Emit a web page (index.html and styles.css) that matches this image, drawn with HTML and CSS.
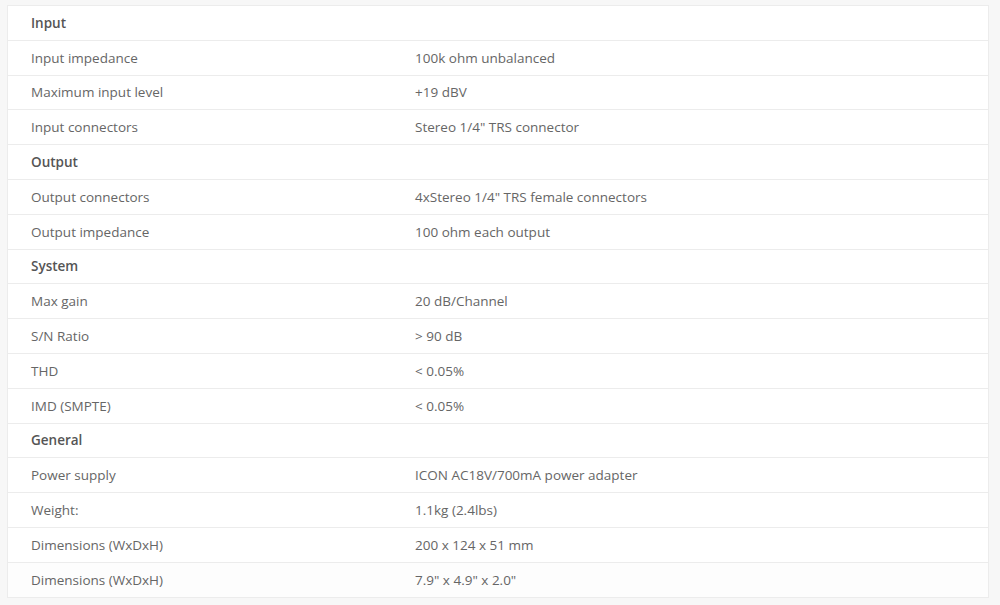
FILE: index.html
```html
<!DOCTYPE html>
<html lang="en">
<head>
    <meta charset="UTF-8">
    <meta name="viewport" content="width=device-width, initial-scale=1.0">
    <title>Specifications</title>
    <link rel="stylesheet" href="styles.css">
</head>
<body>
    <table class="specs">
        <tr class="group"><td colspan="2">Input</td></tr>
        <tr><td>Input impedance</td><td>100k ohm unbalanced</td></tr>
        <tr><td>Maximum input level</td><td>+19 dBV</td></tr>
        <tr><td>Input connectors</td><td>Stereo 1/4" TRS connector</td></tr>
        <tr class="group"><td colspan="2">Output</td></tr>
        <tr><td>Output connectors</td><td>4xStereo 1/4" TRS female connectors</td></tr>
        <tr><td>Output impedance</td><td>100 ohm each output</td></tr>
        <tr class="group"><td colspan="2">System</td></tr>
        <tr><td>Max gain</td><td>20 dB/Channel</td></tr>
        <tr><td>S/N Ratio</td><td>&gt; 90 dB</td></tr>
        <tr><td>THD</td><td>&lt; 0.05%</td></tr>
        <tr><td>IMD (SMPTE)</td><td>&lt; 0.05%</td></tr>
        <tr class="group"><td colspan="2">General</td></tr>
        <tr><td>Power supply</td><td>ICON AC18V/700mA power adapter</td></tr>
        <tr><td>Weight:</td><td>1.1kg (2.4lbs)</td></tr>
        <tr><td>Dimensions (WxDxH)</td><td>200 x 124 x 51 mm</td></tr>
        <tr class="last"><td>Dimensions (WxDxH)</td><td>7.9" x 4.9" x 2.0"</td></tr>
    </table>
</body>
</html>
```

FILE: styles.css
```css
body {
    margin: 0;
    padding: 5px 11px 0 7px;
    background: #f7f7f7;
    font-family: 'Open Sans', sans-serif;
    font-size: 13.5px;
    color: #666;
}
.specs {
    width: 100%;
    border-collapse: collapse;
    background: white;
    border: 1px solid #ececec;
}
.specs td {
    height: 33.8px;
    padding: 0 23px;
    border-top: 1px solid #ececec;
    vertical-align: middle;
}
.specs td:first-child {
    width: 338px;
}
.group td {
    font-weight: 600;
    color: #555;
}
.last td {
    background: #fdfdfd;
}
```
